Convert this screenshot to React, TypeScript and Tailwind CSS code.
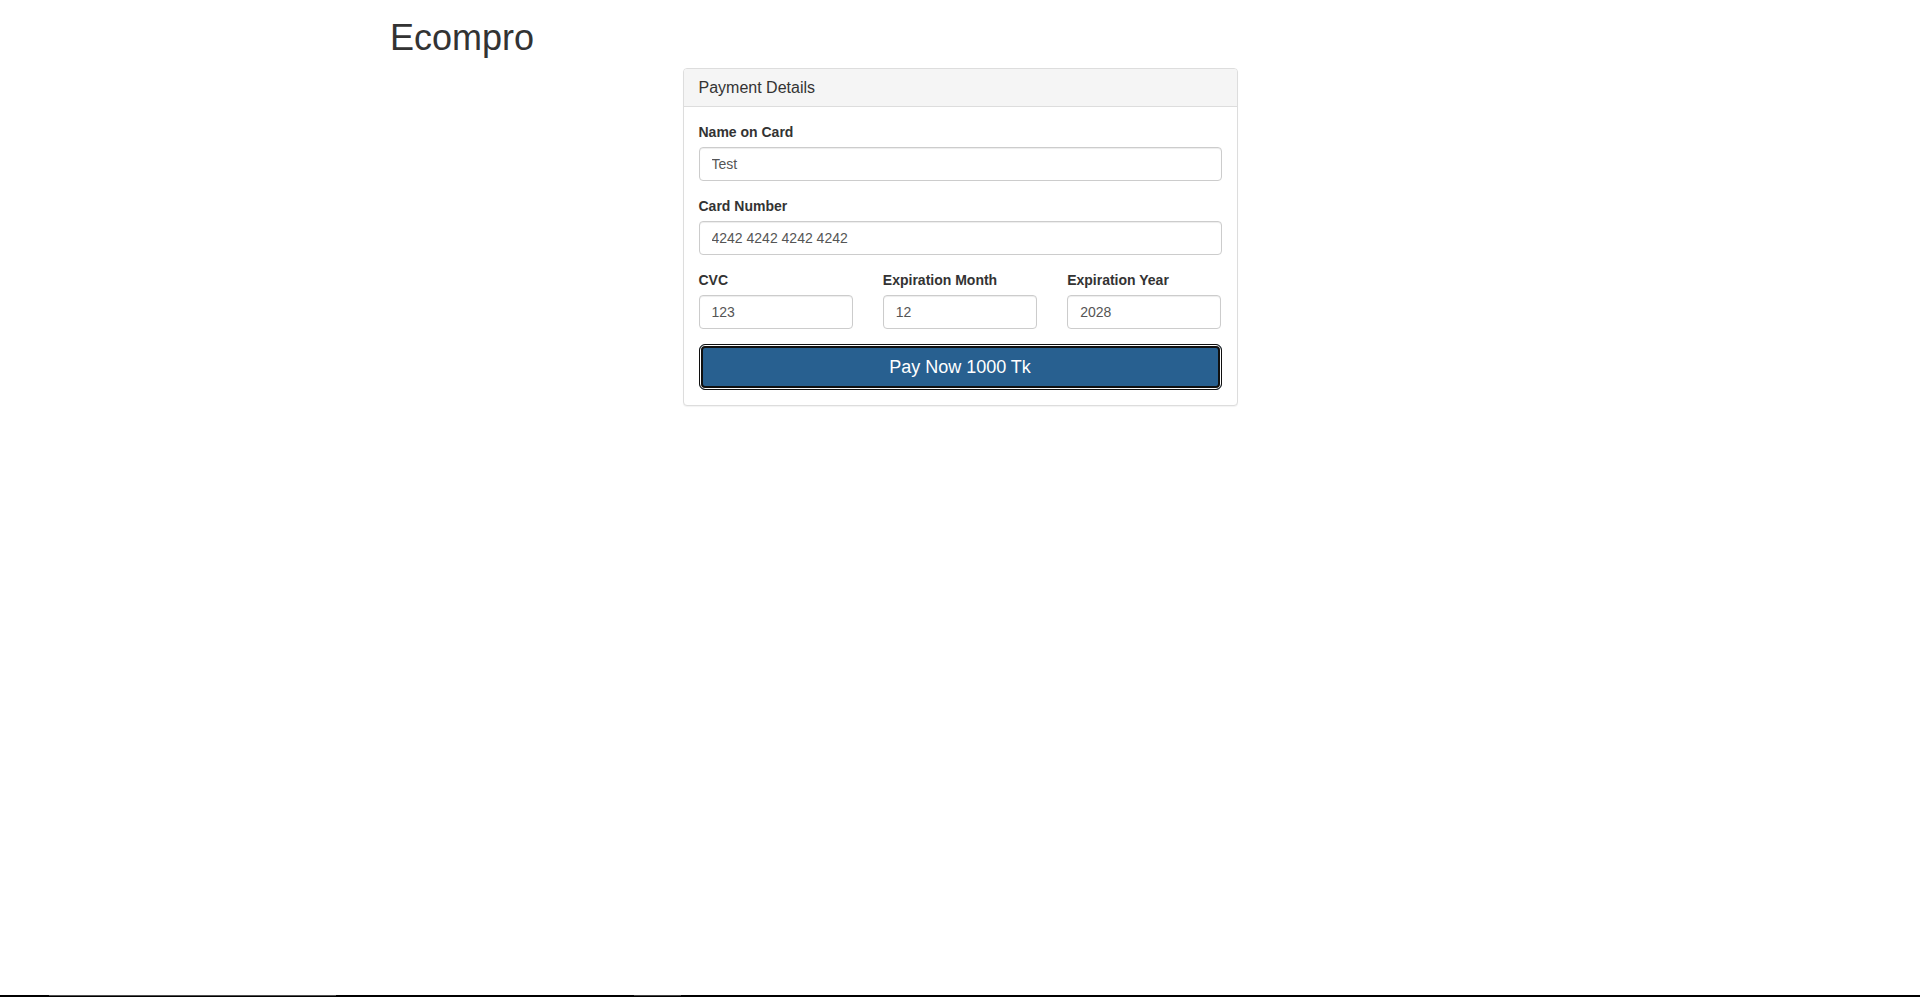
import React, { useState } from 'react';

const font = 'font-["Liberation_Sans",Arial,sans-serif]';

const Field: React.FC<{ label: string; value: string; onChange: (v: string) => void }> = ({ label, value, onChange }) => (
  <div className="mb-[15px]">
    <label className="block mb-[5px] text-[14px] leading-[20px] font-bold text-[#333]">{label}</label>
    <input
      type="text"
      className="block w-full h-[34px] px-[12px] py-[6px] text-[14px] leading-[20px] text-[#555] bg-white border border-[#ccc] rounded-[4px] shadow-[inset_0_1px_1px_rgba(0,0,0,0.075)] focus:outline-none"
      value={value}
      onChange={(e) => onChange(e.target.value)}
    />
  </div>
);

const App: React.FC = () => {
  const [card, setCard] = useState({
    name: 'Test',
    number: '4242 4242 4242 4242',
    cvc: '123',
    month: '12',
    year: '2028'
  });

  return (
    <div className={`min-h-screen flex flex-col bg-white text-[#333] ${font}`}>
      <main className="flex-1">
        <div className="w-[1170px] mx-auto px-[15px]">
          <h1 className="pt-[18px] text-[36px] leading-[40px] font-normal text-[#333]">Ecompro</h1>

          {/* Payment panel */}
          <div className="w-[555px] mx-auto mt-[10px] bg-white border border-[#ddd] rounded-[4px] shadow-[0_1px_1px_rgba(0,0,0,0.05)]">
            <div className="px-[15px] py-[10px] bg-[#f5f5f5] border-b border-[#ddd] rounded-t-[3px]">
              <h3 className="text-[16px] leading-[17px] text-[#333]">Payment Details</h3>
            </div>
            <div className="p-[15px]">
              <Field label="Name on Card" value={card.name} onChange={(v) => setCard({ ...card, name: v })} />
              <Field label="Card Number" value={card.number} onChange={(v) => setCard({ ...card, number: v })} />
              <div className="grid grid-cols-3 gap-x-[30px]">
                <Field label="CVC" value={card.cvc} onChange={(v) => setCard({ ...card, cvc: v })} />
                <Field label="Expiration Month" value={card.month} onChange={(v) => setCard({ ...card, month: v })} />
                <Field label="Expiration Year" value={card.year} onChange={(v) => setCard({ ...card, year: v })} />
              </div>
              <button
                type="button"
                className="block w-full h-[46px] text-[18px] leading-[24px] text-white bg-[#286090] border border-[#101010] rounded-[6px] shadow-[inset_0_0_0_1px_#ffffff,inset_0_0_0_3px_#101010]"
              >
                Pay Now 1000 Tk
              </button>
            </div>
          </div>
        </div>
      </main>

      {/* bottom strip */}
      <div className="flex h-[2px] bg-black">
        <div className="w-[49px]" />
        <div className="w-[287px] h-[1px] bg-[#505050]" />
        <div className="w-[298px]" />
        <div className="w-[47px] h-[1px] bg-[#404040]" />
      </div>
    </div>
  );
};

export default App;
